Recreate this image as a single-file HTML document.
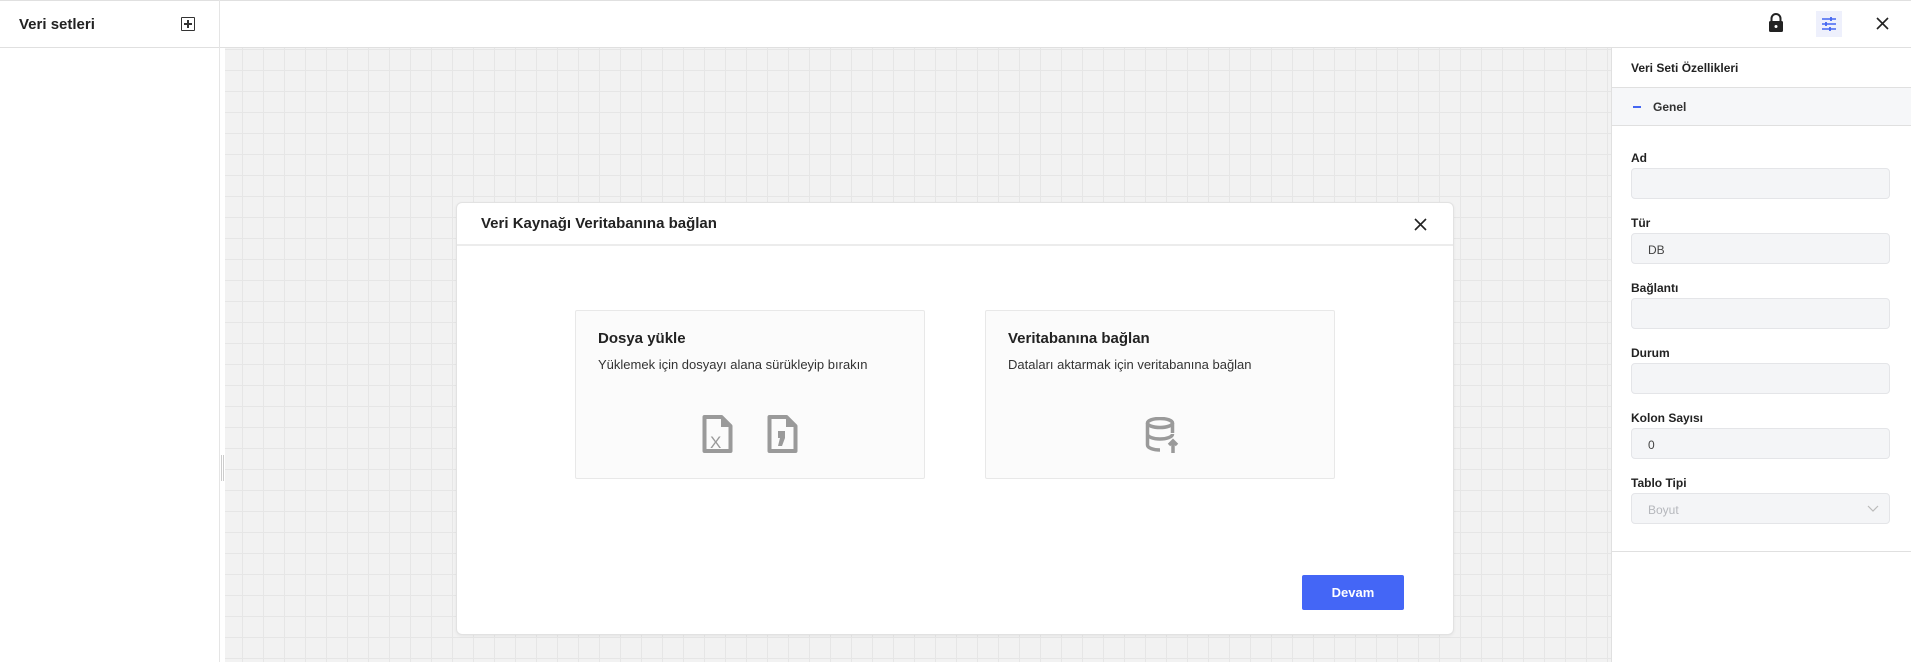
<!DOCTYPE html>
<html><head><meta charset="utf-8"><style>
*{box-sizing:border-box;margin:0;padding:0}
body{width:1911px;height:662px;position:relative;overflow:hidden;background:#fff;font-family:"Liberation Sans",sans-serif;color:#222}
.abs{position:absolute}
.grid{left:225px;top:48px;width:1386px;height:614px;background-color:#f2f2f2;background-image:linear-gradient(#e6e6e6 1px,transparent 1px),linear-gradient(90deg,#e6e6e6 1px,transparent 1px);background-size:21px 21px;background-position:-4px 1px}
.lbl{position:absolute;left:1631px;font-size:12px;font-weight:bold;color:#222}
.inp{position:absolute;left:1631px;width:259px;height:31px;background:#f4f5f7;border:1px solid #e4e5e8;border-radius:4px;font-size:12px;color:#444;padding:9px 0 0 16px}
.card{position:absolute;top:310px;width:350px;height:169px;background:#fbfbfb;border:1px solid #e8e8e8;border-radius:2px}
.card h3{position:absolute;left:22px;top:19px;font-size:15px;font-weight:bold;color:#222}
.card p{position:absolute;left:22px;top:46px;font-size:13px;color:#333}
</style></head><body>
<div class="abs" style="left:0;top:0;width:1911px;height:1px;background:#e0e0e0"></div>
<div class="abs" style="left:0;top:47px;width:1911px;height:1px;background:#e0e0e0"></div>
<div class="abs" style="left:219px;top:0;width:1px;height:662px;background:#e5e5e5"></div>
<div class="abs" style="left:19px;top:16px;font-size:15px;font-weight:bold;color:#222">Veri setleri</div>
<div class="abs" style="left:181px;top:17px;width:14px;height:14px;border:1.5px solid #333;border-radius:1px"></div>
<div class="abs" style="left:184px;top:23px;width:8px;height:1.5px;background:#333"></div>
<div class="abs" style="left:187px;top:20px;width:1.5px;height:8px;background:#333"></div>
<div class="abs grid"></div>
<div class="abs" style="left:221px;top:455px;width:3px;height:26px;border-left:1px solid #ccc;border-right:1px solid #ccc"></div>
<svg class="abs" style="left:1768px;top:13px" width="16" height="20" viewBox="0 0 16 20"><path d="M3.5 9V5.5a4.5 4.5 0 0 1 9 0V9" fill="none" stroke="#222" stroke-width="2"/><rect x="1" y="8" width="14" height="11" rx="1.5" fill="#222"/><circle cx="8" cy="13.5" r="1.5" fill="#fff"/></svg>
<div class="abs" style="left:1816px;top:11px;width:26px;height:26px;background:#eef0fc"></div>
<svg class="abs" style="left:1821px;top:16px" width="16" height="16" viewBox="0 0 16 16" stroke="#4466f2" stroke-width="1.6"><path d="M1 3h14M1 8h14M1 13h14"/><path d="M10 1v4M5 6v4M9 11v4" stroke-width="1.8"/></svg>
<svg class="abs" style="left:1876px;top:17px" width="13" height="13" viewBox="0 0 13 13" stroke="#222" stroke-width="1.6"><path d="M1 1l11 11M12 1L1 12"/></svg>
<div class="abs" style="left:1611px;top:48px;width:1px;height:614px;background:#e0e0e0"></div>
<div class="abs" style="left:1631px;top:61px;font-size:12px;font-weight:bold;color:#222">Veri Seti Özellikleri</div>
<div class="abs" style="left:1612px;top:87px;width:299px;height:39px;background:#f6f7f9;border-top:1px solid #e0e0e0;border-bottom:1px solid #e0e0e0"></div>
<div class="abs" style="left:1633px;top:106px;width:8px;height:1.5px;background:#4466f2"></div>
<div class="abs" style="left:1653px;top:100px;font-size:12px;font-weight:bold;color:#333">Genel</div>
<div class="lbl" style="top:151px">Ad</div><div class="inp" style="top:168px"></div>
<div class="lbl" style="top:216px">Tür</div><div class="inp" style="top:233px">DB</div>
<div class="lbl" style="top:281px">Bağlantı</div><div class="inp" style="top:298px"></div>
<div class="lbl" style="top:346px">Durum</div><div class="inp" style="top:363px"></div>
<div class="lbl" style="top:411px">Kolon Sayısı</div><div class="inp" style="top:428px">0</div>
<div class="lbl" style="top:476px">Tablo Tipi</div><div class="inp" style="top:493px;color:#b5b7bc">Boyut</div>
<svg class="abs" style="left:1867px;top:505px" width="12" height="8" viewBox="0 0 12 8"><path d="M1 1l5 5 5-5" fill="none" stroke="#bbb" stroke-width="1.2"/></svg>
<div class="abs" style="left:1612px;top:551px;width:299px;height:1px;background:#e0e0e0"></div>
<div class="abs" style="left:456px;top:202px;width:998px;height:433px;background:#fff;border:1px solid #e2e2e2;border-radius:6px;box-shadow:0 1px 3px rgba(0,0,0,.06)"></div>
<div class="abs" style="left:457px;top:244px;width:996px;height:2px;background:#ececec"></div>
<div class="abs" style="left:481px;top:215px;font-size:15px;font-weight:bold;color:#222">Veri Kaynağı Veritabanına bağlan</div>
<svg class="abs" style="left:1414px;top:218px" width="13" height="13" viewBox="0 0 13 13" stroke="#222" stroke-width="1.6"><path d="M1 1l11 11M12 1L1 12"/></svg>
<div class="card" style="left:575px"><h3>Dosya yükle</h3><p>Yüklemek için dosyayı alana sürükleyip bırakın</p></div>
<div class="card" style="left:985px"><h3>Veritabanına bağlan</h3><p>Dataları aktarmak için veritabanına bağlan</p></div>
<svg class="abs" style="left:702px;top:415px" width="31" height="38" viewBox="0 0 31 38"><path d="M2.5 2h17l9 9v25h-26z" fill="none" stroke="#9a9a9a" stroke-width="4" stroke-linejoin="round"/><path d="M19 1v11h11" fill="#9a9a9a"/><text x="8" y="33" font-family="Liberation Sans" font-size="17" fill="#9a9a9a">X</text></svg>
<svg class="abs" style="left:767px;top:415px" width="31" height="38" viewBox="0 0 31 38"><path d="M2.5 2h17l9 9v25h-26z" fill="none" stroke="#9a9a9a" stroke-width="4" stroke-linejoin="round"/><path d="M19 1v11h11" fill="#9a9a9a"/><path d="M11 16h7v7l-3 8h-4l2-8h-2z" fill="#9a9a9a"/></svg>
<svg class="abs" style="left:1145px;top:417px" width="34" height="37" viewBox="0 0 34 37" fill="none" stroke="#9a9a9a" stroke-width="3.5"><ellipse cx="15" cy="6" rx="12.5" ry="4.5"/><path d="M2.5 6v22c0 3 6 5 12.5 5M27.5 6v10M2.5 17c0 3 6 5 12.5 5s12.5-2 12.5-5"/><path d="M28 36V24M24 28l4-4 4 4"/></svg>
<div class="abs" style="left:1302px;top:575px;width:102px;height:35px;background:#4466f6;border-radius:2px;color:#fff;font-size:13px;font-weight:bold;text-align:center;line-height:35px">Devam</div>
</body></html>
